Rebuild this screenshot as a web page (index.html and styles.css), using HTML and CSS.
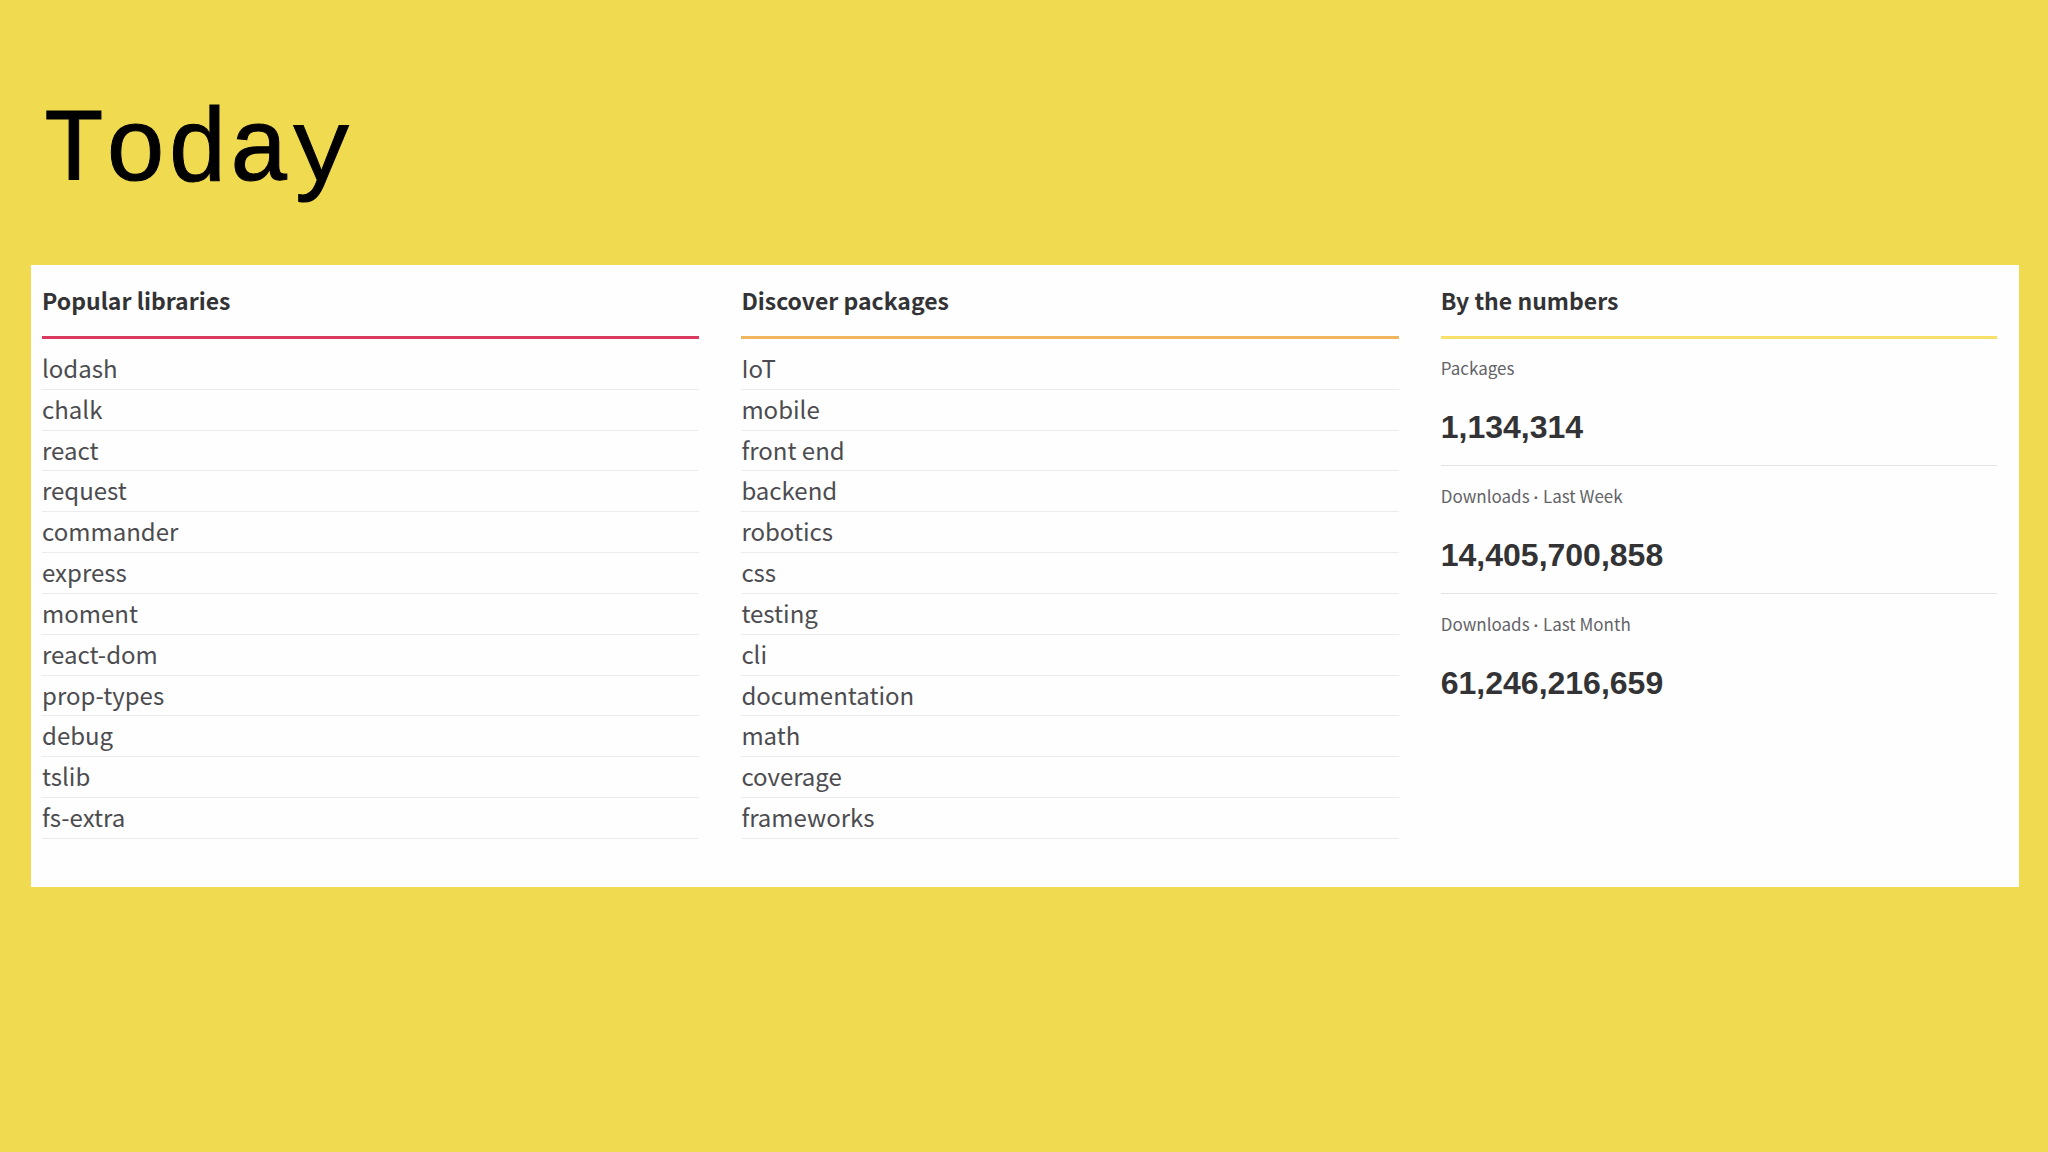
FILE: index.html
```html
<!DOCTYPE html>
<html lang="en">
<head>
    <meta charset="UTF-8">
    <meta name="viewport" content="width=device-width, initial-scale=1.0">
    <title>Today</title>
    <link rel="stylesheet" href="styles.css">
</head>
<body>
    <h1>Today</h1>

    <main class="panel">
        <section class="column popular">
            <h2>Popular libraries</h2>
            <ul class="links">
                <li><a href="#lodash">lodash</a></li>
                <li><a href="#chalk">chalk</a></li>
                <li><a href="#react">react</a></li>
                <li><a href="#request">request</a></li>
                <li><a href="#commander">commander</a></li>
                <li><a href="#express">express</a></li>
                <li><a href="#moment">moment</a></li>
                <li><a href="#react-dom">react-dom</a></li>
                <li><a href="#prop-types">prop-types</a></li>
                <li><a href="#debug">debug</a></li>
                <li><a href="#tslib">tslib</a></li>
                <li><a href="#fs-extra">fs-extra</a></li>
            </ul>
        </section>

        <section class="column discover">
            <h2>Discover packages</h2>
            <ul class="links">
                <li><a href="#iot">IoT</a></li>
                <li><a href="#mobile">mobile</a></li>
                <li><a href="#front-end">front end</a></li>
                <li><a href="#backend">backend</a></li>
                <li><a href="#robotics">robotics</a></li>
                <li><a href="#css">css</a></li>
                <li><a href="#testing">testing</a></li>
                <li><a href="#cli">cli</a></li>
                <li><a href="#documentation">documentation</a></li>
                <li><a href="#math">math</a></li>
                <li><a href="#coverage">coverage</a></li>
                <li><a href="#frameworks">frameworks</a></li>
            </ul>
        </section>

        <section class="column numbers">
            <h2>By the numbers</h2>
            <dl class="stats">
                <div class="stat">
                    <dt>Packages</dt>
                    <dd>1,134,314</dd>
                </div>
                <div class="stat">
                    <dt>Downloads <span class="dot">·</span> Last Week</dt>
                    <dd>14,405,700,858</dd>
                </div>
                <div class="stat">
                    <dt>Downloads <span class="dot">·</span> Last Month</dt>
                    <dd>61,246,216,659</dd>
                </div>
            </dl>
        </section>
    </main>
</body>
</html>
```
FILE: styles.css
```css
* {
    box-sizing: border-box;
}
body {
    font-family: 'Noto Sans CJK SC', 'Noto Sans', sans-serif;
    color: #333336;
    background: #f0da50;
    margin: 0;
    padding: 93px 29px 40px 31px;
}
h1 {
    font-family: 'Liberation Mono', monospace;
    font-size: 103px;
    font-weight: 400;
    line-height: 120px;
    color: #000;
    -webkit-text-stroke: 1px #000;
    margin: 0 0 52px;
    padding-left: 12px;
}
.panel {
    display: grid;
    grid-template-columns: 13fr 13fr 11fr;
    gap: 42px;
    background: #fefefe;
    padding: 15px 22px 48px 11px;
}
h2 {
    font-size: 23px;
    font-weight: 600;
    line-height: 40px;
    margin: 0 0 10px;
    padding-bottom: 16px;
    border-bottom: 3px solid;
}
.popular h2 {
    border-color: #d93a5e;
}
.discover h2 {
    border-color: #f2b560;
}
.numbers h2 {
    border-color: #f8e169;
}
.links {
    display: grid;
    grid-auto-rows: 1fr;
    min-height: 490px;
    list-style: none;
    margin: 0;
    padding: 0;
}
.links li {
    border-bottom: 1px solid #ececf0;
}
.links a {
    display: block;
    font-size: 24px;
    line-height: 38px;
    color: #4c4c50;
    text-decoration: none;
}
.stats {
    margin: 0;
    padding-top: 3px;
}
.stat {
    padding-bottom: 18px;
    margin-bottom: 14px;
    border-bottom: 1px solid #e2e2e8;
}
.stat:last-child {
    border-bottom: 0;
}
.stat dt {
    font-size: 17px;
    font-weight: 400;
    line-height: 32px;
    color: #636367;
    margin-bottom: 23px;
}
.stat .dot {
    font-family: 'Liberation Sans', Arial, sans-serif;
    font-weight: 700;
    line-height: 1;
}
.stat dd {
    font-family: 'Liberation Sans', Arial, sans-serif;
    font-size: 32px;
    font-weight: 700;
    line-height: 40px;
    margin: 0;
}
```
